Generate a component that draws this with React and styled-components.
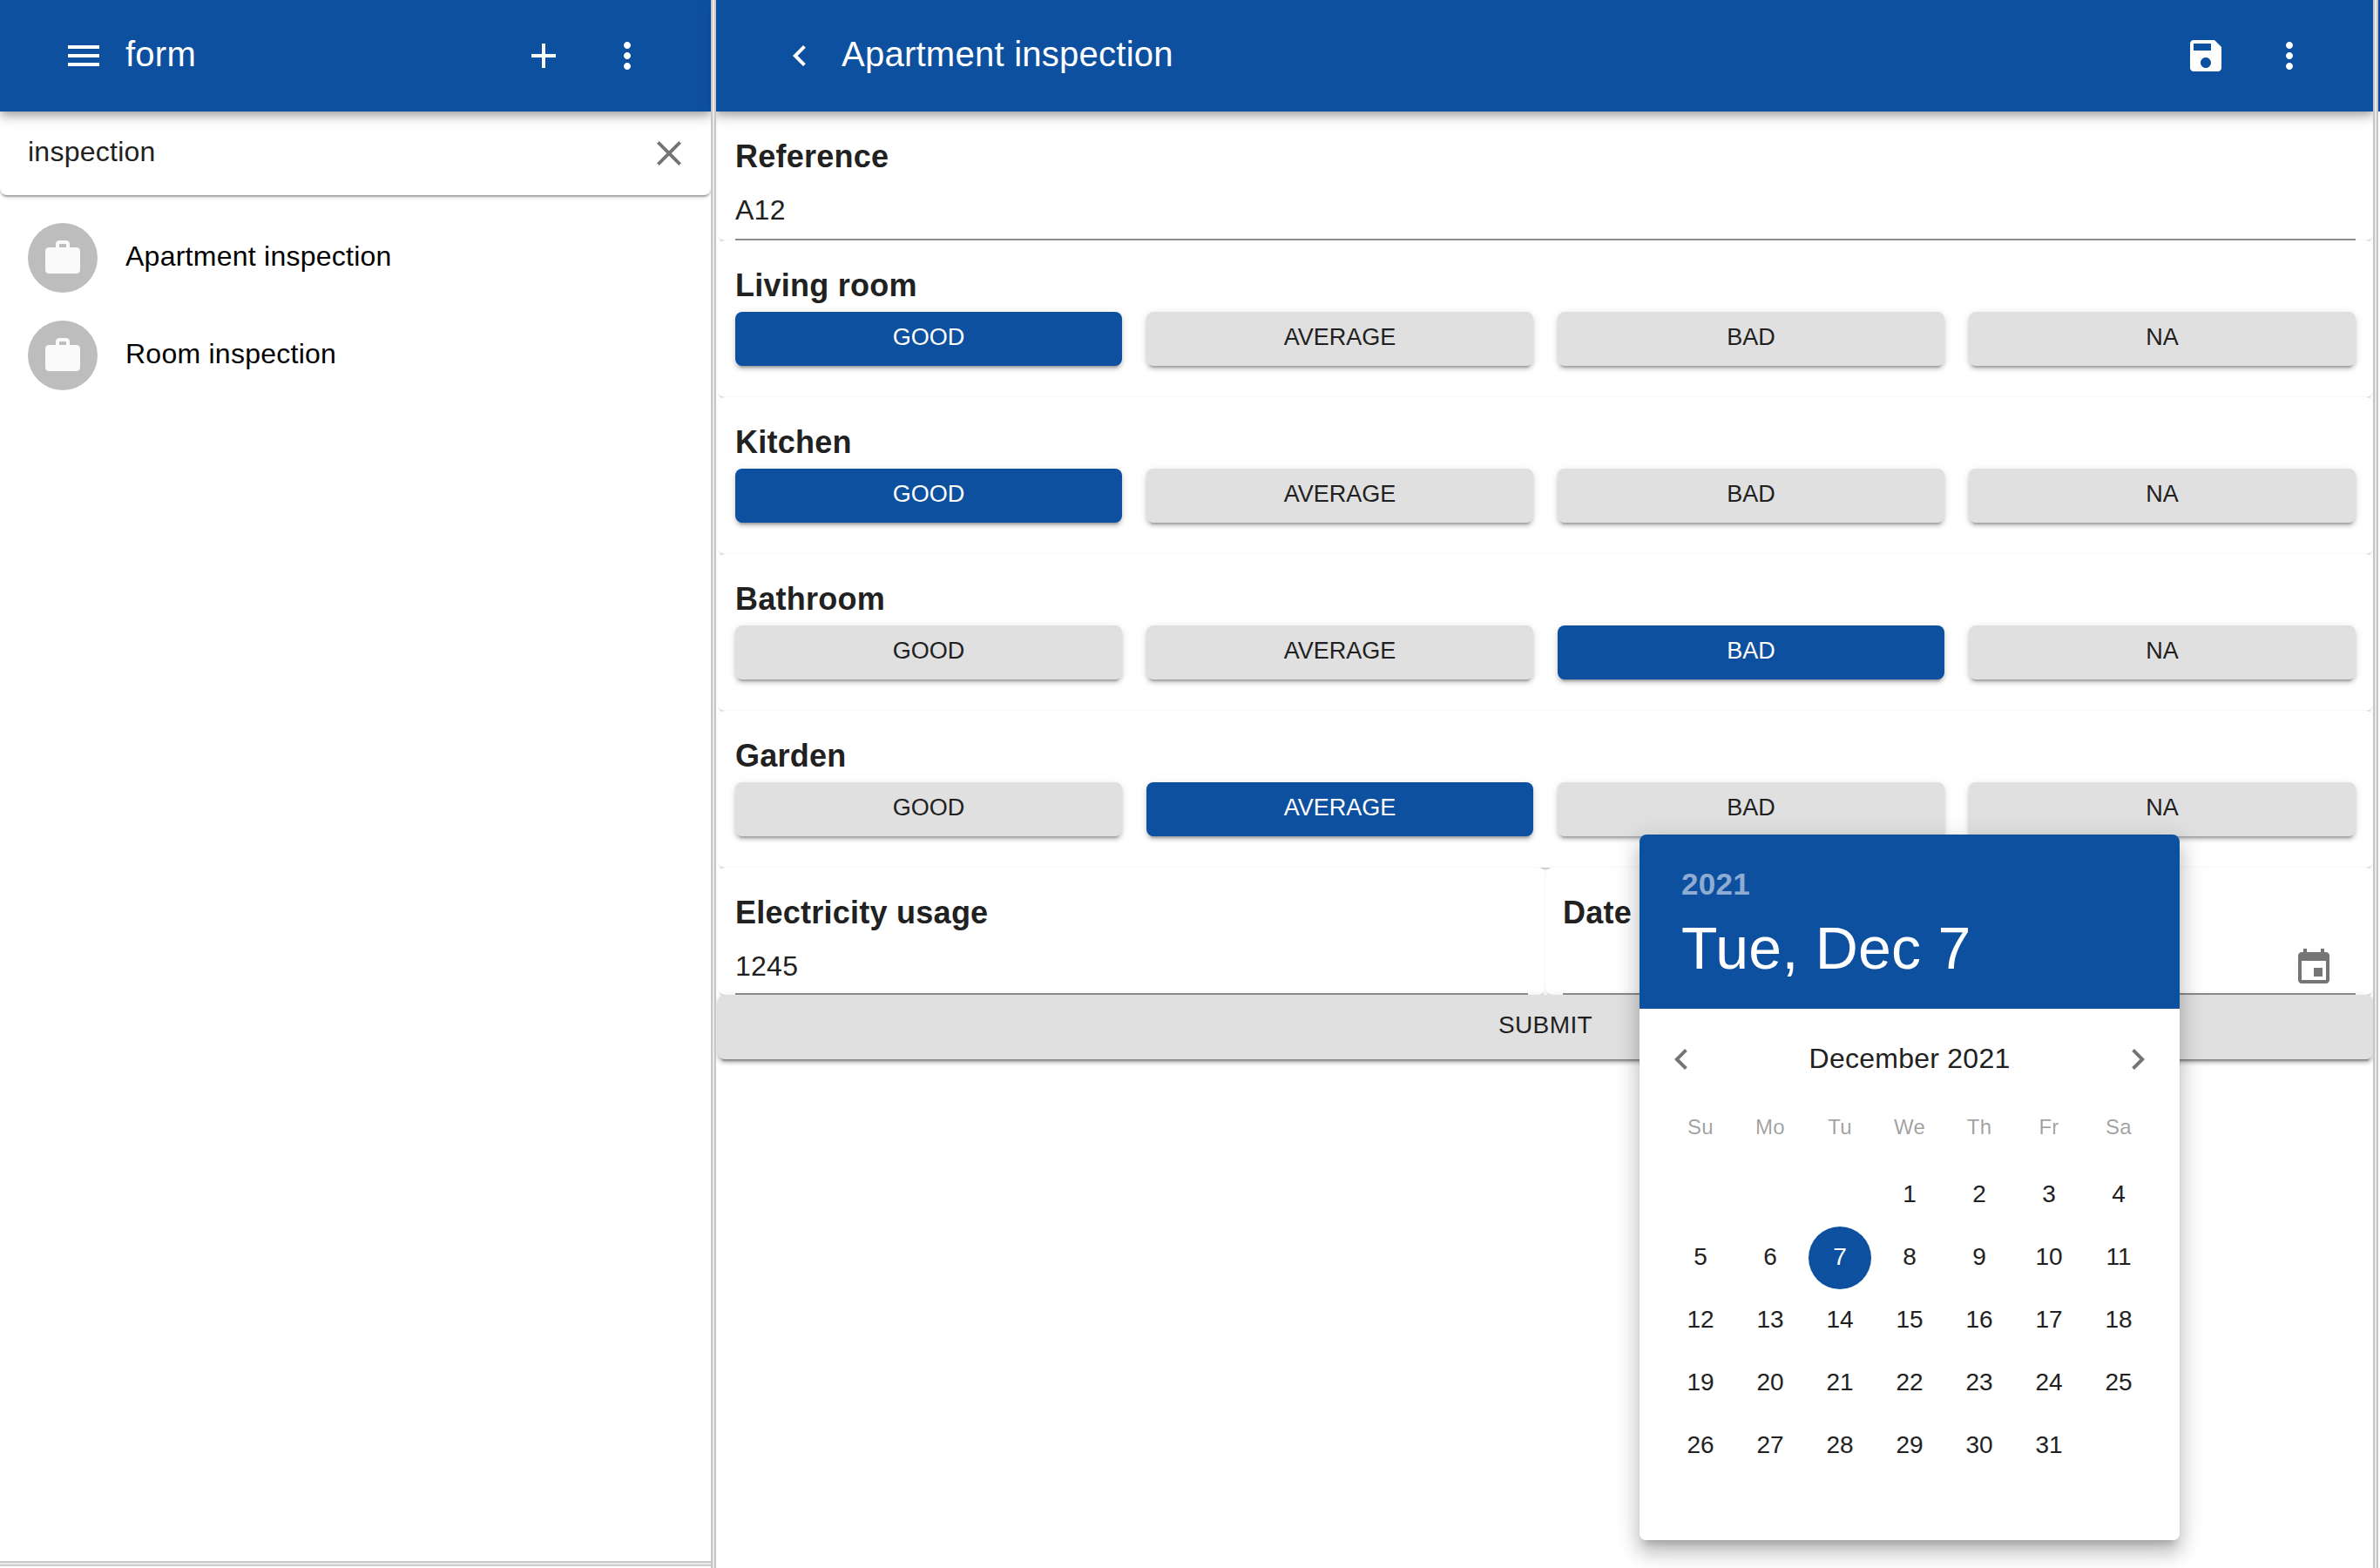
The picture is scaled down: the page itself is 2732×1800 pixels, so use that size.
import React from 'react';
import styled, {createGlobalStyle} from 'styled-components';

const BLUE = '#0e50a0';
const INK = '#212121';

const iconPaths = {
    menu: 'M3 18h18v-2H3v2zm0-5h18v-2H3v2zm0-7v2h18V6H3z',
    add: 'M19 13h-6v6h-2v-6H5v-2h6V5h2v6h6v2z',
    more: 'M12 8c1.1 0 2-.9 2-2s-.9-2-2-2-2 .9-2 2 .9 2 2 2zm0 2c-1.1 0-2 .9-2 2s.9 2 2 2 2-.9 2-2-.9-2-2-2zm0 6c-1.1 0-2 .9-2 2s.9 2 2 2 2-.9 2-2-.9-2-2-2z',
    close: 'M19 6.41L17.59 5 12 10.59 6.41 5 5 6.41 10.59 12 5 17.59 6.41 19 12 13.41 17.59 19 19 17.59 13.41 12z',
    work: 'M20 6h-4V4c0-1.11-.89-2-2-2h-4c-1.11 0-2 .89-2 2v2H4c-1.11 0-1.99.89-1.99 2L2 19c0 1.11.89 2 2 2h16c1.11 0 2-.89 2-2V8c0-1.11-.89-2-2-2zm-6 0h-4V4h4v2z',
    left: 'M15.41 7.41L14 6l-6 6 6 6 1.41-1.41L10.83 12z',
    right: 'M10 6L8.59 7.41 13.17 12l-4.58 4.59L10 18l6-6z',
    save: 'M17 3H5c-1.11 0-2 .9-2 2v14c0 1.1.89 2 2 2h14c1.1 0 2-.9 2-2V7l-4-4zm-5 16c-1.66 0-3-1.34-3-3s1.34-3 3-3 3 1.34 3 3-1.34 3-3 3zm3-10H5V5h10v4z',
    event: 'M17 12h-5v5h5v-5zM16 1v2H8V1H6v2H5c-1.11 0-1.99.9-1.99 2L3 19c0 1.1.89 2 2 2h14c1.1 0 2-.9 2-2V5c0-1.1-.9-2-2-2h-1V1h-2zm3 18H5V8h14v11z'
};

const GlobalStyle = createGlobalStyle`
    html, body {
        margin: 0;
        padding: 0;
        background: #fff;
    }

    body {
        font-family: "Liberation Sans", Arial, sans-serif;
        letter-spacing: .25px;
        color: ${INK};
    }
`;

const Svg = styled.svg`
    display: block;
    flex: none;
    width: 48px;
    height: 48px;
    fill: ${props => props.$color || '#fff'};
`;

const Icon = ({name, color, className}) => (
    <Svg viewBox="0 0 24 24" $color={color} className={className}>
        <path d={iconPaths[name]}/>
    </Svg>
);

const Screen = styled.div`
    position: relative;
    display: flex;
    width: 2732px;
    height: 1800px;
    overflow: hidden;
    background: #fff;
`;

const LeftPane = styled.section`
    display: flex;
    flex-direction: column;
    flex: none;
    width: 816px;
`;

const RightPane = styled.section`
    display: flex;
    flex-direction: column;
    flex: none;
    width: 1902px;
`;

const PaneDivider = styled.div`
    position: relative;
    z-index: 3;
    flex: none;
    width: 2px;
    box-sizing: content-box;
    border-left: 2px solid #c6c6c6;
    border-right: 2px solid #c6c6c6;
    background: #e9e9e9;
`;

const EdgeStrip = styled.div`
    flex: none;
    width: 2px;
    height: 128px;
    background: ${BLUE};
`;

const AppBar = styled.header`
    position: relative;
    z-index: 2;
    display: flex;
    align-items: center;
    flex: none;
    gap: 24px;
    height: 128px;
    padding: 0 72px;
    background: ${BLUE};
    box-shadow: 0 4px 8px -2px rgba(0, 0, 0, .2), 0 8px 10px 0 rgba(0, 0, 0, .14), 0 2px 20px 0 rgba(0, 0, 0, .12);
`;

const BarTitle = styled.h1`
    margin: 0;
    color: #fff;
    font-size: 40px;
    font-weight: 400;
    line-height: 48px;
    white-space: nowrap;
    transform: translateY(-2px);
`;

const BarActions = styled.div`
    display: flex;
    gap: 48px;
    margin-left: auto;
`;

const SearchBar = styled.div`
    position: relative;
    z-index: 1;
    display: flex;
    align-items: center;
    justify-content: space-between;
    flex: none;
    height: 96px;
    padding: 0 24px 0 32px;
    border-radius: 0 0 8px 8px;
    background: #fff;
    font-size: 32px;
    box-shadow: 0 4px 2px -2px rgba(0, 0, 0, .2), 0 2px 2px 0 rgba(0, 0, 0, .14), 0 2px 6px 0 rgba(0, 0, 0, .12);
`;

const SearchText = styled.span`
    padding-bottom: 4px;
`;

const ResultList = styled.ul`
    flex: 1;
    margin: 0;
    padding: 16px 0 0;
    list-style: none;
`;

const ResultItem = styled.li`
    display: flex;
    align-items: center;
    gap: 32px;
    height: 112px;
    padding: 0 32px;
    color: #000;
    font-size: 32px;
`;

const ResultText = styled.span`
    padding-bottom: 4px;
`;

const Avatar = styled.span`
    display: flex;
    align-items: center;
    justify-content: center;
    flex: none;
    width: 80px;
    height: 80px;
    border-radius: 50%;
    background: #bdbdbd;
`;

const ScrollTrack = styled.div`
    flex: none;
    height: 2px;
    margin-bottom: 2px;
    border-top: 2px solid #c9c9c9;
    border-bottom: 2px solid #cfcfcf;
    background: #e9e9e9;
`;

const Form = styled.main`
    display: flex;
    flex-direction: column;
    padding-left: 2px;
`;

const Card = styled.div`
    padding: 32px 20px 36px;
    border-radius: 8px;
    background: #fff;
    box-shadow: 0 4px 2px -2px rgba(0, 0, 0, .2), 0 0 2px 0 rgba(0, 0, 0, .1);
`;

const InputCard = styled(Card)`
    padding-bottom: 0;
`;

const Label = styled.div`
    font-size: 36px;
    font-weight: 700;
    line-height: 40px;
    white-space: nowrap;
`;

const InputLine = styled.div`
    display: flex;
    align-items: center;
    justify-content: flex-end;
    height: 36px;
    margin-top: 23px;
    padding-bottom: ${props => props.$pad}px;
    border-bottom: 2px solid #8f8f8f;
`;

const InputValue = styled.span`
    flex: 1;
    font-size: 32px;
    line-height: 36px;
`;

const CalendarIcon = styled(Icon)`
    margin: 4px 24px 0 0;
`;

const ChoiceRow = styled.div`
    display: grid;
    grid-template-columns: repeat(4, 1fr);
    gap: 28px;
    margin-top: 10px;
`;

const ChoiceButton = styled.button`
    height: 62px;
    padding: 0 0 4px;
    border: 0;
    border-radius: 8px;
    background: ${props => props.$active ? BLUE : '#e0e0e0'};
    color: ${props => props.$active ? '#fff' : INK};
    font-family: inherit;
    font-size: 27px;
    box-shadow: 0 6px 2px -4px rgba(0, 0, 0, .2), 0 4px 4px 0 rgba(0, 0, 0, .14), 0 2px 10px 0 rgba(0, 0, 0, .12);
`;

const TwoColumns = styled.div`
    display: grid;
    grid-template-columns: 1fr 1fr;
`;

const SubmitButton = styled.button`
    position: relative;
    height: 74px;
    padding: 0 0 4px;
    border: 0;
    border-radius: 8px;
    background: #e0e0e0;
    color: ${INK};
    font-family: inherit;
    font-size: 28px;
    letter-spacing: .4px;
    box-shadow: 0 6px 2px -4px rgba(0, 0, 0, .3), 0 4px 4px 0 rgba(0, 0, 0, .2), 0 2px 10px 0 rgba(0, 0, 0, .12);
`;

const Picker = styled.div`
    position: absolute;
    top: 958px;
    left: 1882px;
    z-index: 5;
    width: 620px;
    height: 810px;
    overflow: hidden;
    border-radius: 8px;
    background: #fff;
`;

// shadow lives on its own layer, Picker has to clip its header to the radius
const PickerShadow = styled.div`
    position: absolute;
    top: 958px;
    left: 1882px;
    z-index: 4;
    width: 620px;
    height: 810px;
    border-radius: 8px;
    box-shadow: 0 10px 10px -6px rgba(0, 0, 0, .2), 0 16px 20px 2px rgba(0, 0, 0, .14), 0 6px 28px 4px rgba(0, 0, 0, .12);
`;

const PickerHead = styled.div`
    box-sizing: border-box;
    height: 200px;
    padding: 37px 48px 0;
    background: ${BLUE};
    color: #fff;
`;

const PickerYear = styled.div`
    color: rgba(255, 255, 255, .54);
    font-size: 35px;
    font-weight: 700;
    line-height: 40px;
`;

const PickerDate = styled.div`
    margin-top: 15px;
    font-size: 68px;
    line-height: 76px;
`;

const MonthBar = styled.div`
    display: flex;
    align-items: center;
    justify-content: space-between;
    height: 48px;
    margin-top: 34px;
    padding: 0 24px;
`;

const MonthName = styled.span`
    padding-bottom: 2px;
    font-size: 32px;
`;

const WeekGrid = styled.div`
    display: grid;
    grid-template-columns: repeat(7, 80px);
    justify-content: center;
    margin-top: 29px;
`;

const WeekDay = styled.span`
    height: 48px;
    color: rgba(0, 0, 0, .38);
    font-size: 24px;
    line-height: 50px;
    text-align: center;
`;

const DayGrid = styled.div`
    display: grid;
    grid-template-columns: repeat(7, 80px);
    grid-auto-rows: 72px;
    justify-content: center;
    margin-top: 19px;
`;

const Day = styled.span`
    justify-self: center;
    box-sizing: border-box;
    width: 72px;
    height: 72px;
    padding-bottom: 3px;
    border-radius: 50%;
    background: ${props => props.$selected ? BLUE : 'transparent'};
    color: ${props => props.$selected ? '#fff' : INK};
    font-size: 28px;
    letter-spacing: 0;
    line-height: 69px;
    text-align: center;
`;

const rooms = [
    {name: 'Living room', value: 'GOOD'},
    {name: 'Kitchen', value: 'GOOD'},
    {name: 'Bathroom', value: 'BAD'},
    {name: 'Garden', value: 'AVERAGE'}
];
const choices = ['GOOD', 'AVERAGE', 'BAD', 'NA'];
const weekDays = ['Su', 'Mo', 'Tu', 'We', 'Th', 'Fr', 'Sa'];
const days = Array.from({length: 31}, (_, i) => i + 1);

const App = () => (
    <Screen>
        <GlobalStyle/>
        <LeftPane>
            <AppBar>
                <Icon name="menu"/>
                <BarTitle>form</BarTitle>
                <BarActions>
                    <Icon name="add"/>
                    <Icon name="more"/>
                </BarActions>
            </AppBar>
            <SearchBar>
                <SearchText>inspection</SearchText>
                <Icon name="close" color="#757575"/>
            </SearchBar>
            <ResultList>
                {['Apartment inspection', 'Room inspection'].map(title => (
                    <ResultItem key={title}>
                        <Avatar><Icon name="work" color="#fafafa"/></Avatar>
                        <ResultText>{title}</ResultText>
                    </ResultItem>
                ))}
            </ResultList>
            <ScrollTrack/>
        </LeftPane>
        <PaneDivider/>
        <RightPane>
            <AppBar>
                <Icon name="left"/>
                <BarTitle>Apartment inspection</BarTitle>
                <BarActions>
                    <Icon name="save"/>
                    <Icon name="more"/>
                </BarActions>
            </AppBar>
            <Form>
                <InputCard>
                    <Label>Reference</Label>
                    <InputLine $pad={15}><InputValue>A12</InputValue></InputLine>
                </InputCard>
                {rooms.map(room => (
                    <Card key={room.name}>
                        <Label>{room.name}</Label>
                        <ChoiceRow>
                            {choices.map(choice => (
                                <ChoiceButton key={choice} $active={choice === room.value}>{choice}</ChoiceButton>
                            ))}
                        </ChoiceRow>
                    </Card>
                ))}
                <TwoColumns>
                    <InputCard>
                        <Label>Electricity usage</Label>
                        <InputLine $pad={13}><InputValue>1245</InputValue></InputLine>
                    </InputCard>
                    <InputCard>
                        <Label>Date</Label>
                        <InputLine $pad={13}><CalendarIcon name="event" color="#757575"/></InputLine>
                    </InputCard>
                </TwoColumns>
                <SubmitButton>SUBMIT</SubmitButton>
            </Form>
        </RightPane>
        <PaneDivider/>
        <EdgeStrip/>
        <PickerShadow/>
        <Picker>
            <PickerHead>
                <PickerYear>2021</PickerYear>
                <PickerDate>Tue, Dec 7</PickerDate>
            </PickerHead>
            <MonthBar>
                <Icon name="left" color="#757575"/>
                <MonthName>December 2021</MonthName>
                <Icon name="right" color="#757575"/>
            </MonthBar>
            <WeekGrid>
                {weekDays.map(day => <WeekDay key={day}>{day}</WeekDay>)}
            </WeekGrid>
            <DayGrid>
                {[0, 1, 2].map(blank => <span key={blank}/>)}
                {days.map(day => <Day key={day} $selected={day === 7}>{day}</Day>)}
            </DayGrid>
        </Picker>
    </Screen>
);

export default App;
